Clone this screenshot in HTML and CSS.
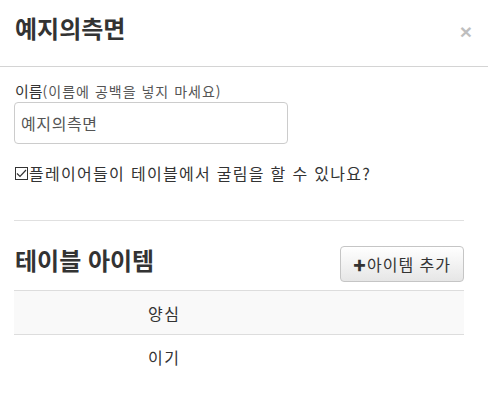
FILE: index.html
```html
<!DOCTYPE html>
<html lang="ko">
<head>
<meta charset="utf-8">
<link rel="stylesheet" href="styles.css">
</head>
<body>
<div class="modal">
  <div class="modal-header">
    <h3 class="title">예지의측면</h3>
    <span class="close">×</span>
  </div>
  <div class="modal-body">
    <label class="label">이름<small class="hint">(이름에 공백을 넣지 마세요)</small></label>
    <input class="input" type="text" value="예지의측면">
    <label class="check">
      <span class="box"><svg width="11" height="9" viewBox="0 0 11 9"><path d="M1 4.5 L4 7.5 L10 1" fill="none" stroke="#333" stroke-width="1.2"/></svg></span>플레이어들이 테이블에서 굴림을 할 수 있나요?
    </label>
    <hr class="rule">
    <div class="section-head">
      <h3 class="section-title">테이블 아이템</h3>
      <button class="btn"><span class="plus">✚</span>아이템 추가</button>
    </div>
    <table class="items">
      <tbody>
        <tr class="odd"><td class="c1"></td><td>양심</td></tr>
        <tr><td class="c1"></td><td>이기</td></tr>
      </tbody>
    </table>
  </div>
</div>
</body>
</html>
```

FILE: styles.css
```css
* { box-sizing: border-box; }
html, body {
  margin: 0;
  padding: 0;
  background: #fff;
}
body {
  font-family: "Noto Sans CJK KR", "Noto Sans", sans-serif;
  color: #333;
  width: 488px;
  height: 409px;
  overflow: hidden;
}
.modal-header {
  display: flex;
  justify-content: space-between;
  align-items: center;
  height: 67px;
  padding: 0 15px 0 15px;
  border-bottom: 1px solid #d4d4d4;
}
.title {
  margin: 0;
  font-size: 24px;
  font-weight: bold;
  line-height: 30px;
  color: #333;
  padding-bottom: 10px;
}
.close {
  font-family: "Liberation Sans", sans-serif;
  font-size: 21px;
  font-weight: bold;
  color: #000;
  opacity: 0.25;
  line-height: 20px;
  margin-right: 1px;
  padding-bottom: 2px;
}
.modal-body {
  padding: 13px 24px 0 14px;
}
.label {
  display: block;
  font-size: 15px;
  line-height: 22px;
  padding-left: 1px;
  color: #333;
}
.hint {
  font-size: 14px;
  letter-spacing: 1px;
  color: #555;
}
.input {
  display: block;
  margin-top: 0;
  width: 274px;
  height: 42px;
  border: 1px solid #ccc;
  border-radius: 4px;
  padding: 0 6px;
  font-family: "Noto Sans CJK KR", sans-serif;
  font-size: 16px;
  letter-spacing: 0.6px;
  color: #555;
  background: #fff;
}
.check {
  display: flex;
  align-items: center;
  margin-top: 18px;
  font-size: 16px;
  letter-spacing: 1.3px;
  line-height: 22px;
  color: #333;
}
.box {
  display: inline-flex;
  align-items: center;
  justify-content: center;
  width: 13px;
  height: 13px;
  border: 1px solid #333;
  margin: 0 1px 0 1px;
  letter-spacing: 0;
}
.rule {
  margin: 36px 0 0 0;
  border: 0;
  border-top: 1px solid #e0e0e0;
}
.section-head {
  display: flex;
  justify-content: space-between;
  align-items: flex-start;
  padding: 24px 0 8px 0;
}
.section-title {
  margin: 0 0 0 1px;
  font-size: 24px;
  font-weight: bold;
  line-height: 30px;
  color: #333;
}
.btn {
  margin-top: 1px;
  height: 36px;
  width: 124px;
  padding: 0 8px;
  border: 1px solid #c5c5c5;
  border-radius: 4px;
  background: linear-gradient(#ffffff, #e6e6e6);
  font-family: "Noto Sans CJK KR", sans-serif;
  font-size: 16px;
  letter-spacing: 1px;
  color: #333;
  display: flex;
  align-items: center;
  justify-content: center;
}
.plus {
  font-size: 13px;
  margin-right: 1px;
  letter-spacing: 0;
}
.items {
  width: 450px;
  border-collapse: collapse;
  font-size: 16px;
  letter-spacing: 1.5px;
  color: #333;
}
.items td {
  border-top: 1px solid #ddd;
  height: 44px;
  padding: 0 8px;
}
.items td.c1 {
  width: 126px;
}
.items tr.odd td {
  background: #f9f9f9;
}
```
